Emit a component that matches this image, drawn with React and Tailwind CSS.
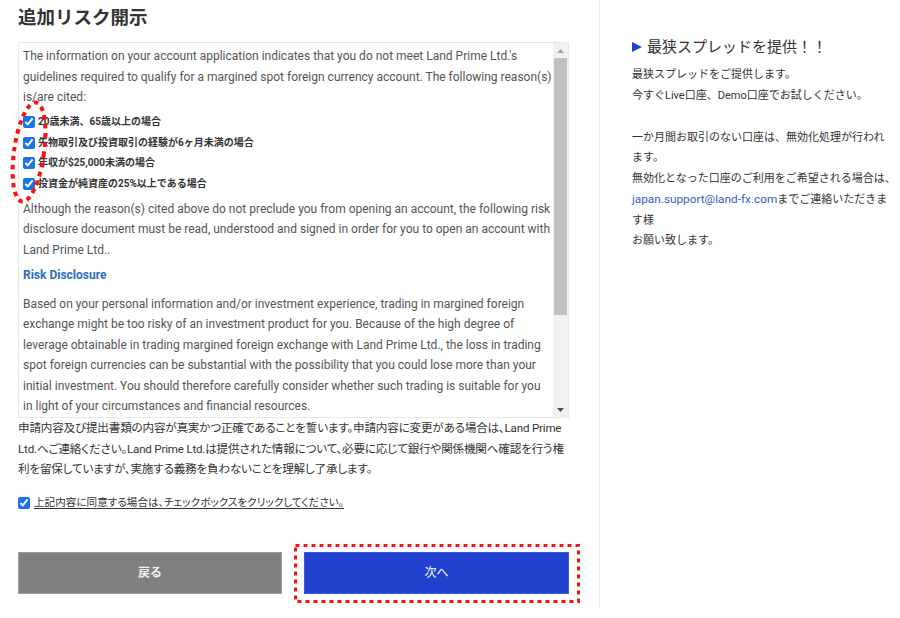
import React from "react";

const FONT = "font-['Roboto','Noto_Sans_CJK_JP',sans-serif]";

function Item({ children }) {
  return (
    <label className="flex items-center gap-[3px] h-[20.5px] text-[10px] font-bold text-[#333]">
      <input type="checkbox" defaultChecked className="w-[12px] h-[12px] m-0 accent-[#1a73e8]" />
      <span>{children}</span>
    </label>
  );
}

export default function App() {
  return (
    <div className={`w-[900px] h-[618px] bg-white flex ${FONT}`}>
      {/* left column */}
      <div className="relative w-[600px] h-[607px] shrink-0 border-r border-[#ececec] pl-[18px] pr-[30px] pt-[6px]">
        <h1 className="text-[18.5px] leading-[24px] font-bold text-[#333]">追加リスク開示</h1>

        <div className="mt-[12px] h-[376px] flex border border-[#e8e8e8]">
          <div className="flex-1 overflow-hidden pl-[4px] pr-[1px] pt-[3px] text-[12px] leading-[20.5px] text-[#555] whitespace-nowrap">
            <p>
              The information on your account application indicates that you do not meet Land Prime Ltd.'s<br />
              guidelines required to qualify for a margined spot foreign currency account. The following reason(s)<br />
              is/are cited:
            </p>
            <div className="mt-[4.5px] flex flex-col">
              <Item>20歳未満、65歳以上の場合</Item>
              <Item>先物取引及び投資取引の経験が6ヶ月未満の場合</Item>
              <Item>年収が$25,000未満の場合</Item>
              <Item>投資金が純資産の25%以上である場合</Item>
            </div>
            <p className="mt-[4.5px]">
              Although the reason(s) cited above do not preclude you from opening an account, the following risk<br />
              disclosure document must be read, understood and signed in order for you to open an account with<br />
              Land Prime Ltd..
            </p>
            <p className="mt-[5px] font-bold text-[#2d6cc0]">Risk Disclosure</p>
            <p className="mt-[8px]">
              Based on your personal information and/or investment experience, trading in margined foreign<br />
              exchange might be too risky of an investment product for you. Because of the high degree of<br />
              leverage obtainable in trading margined foreign exchange with Land Prime Ltd., the loss in trading<br />
              spot foreign currencies can be substantial with the possibility that you could lose more than your<br />
              initial investment. You should therefore carefully consider whether such trading is suitable for you<br />
              in light of your circumstances and financial resources.
            </p>
          </div>
          {/* scrollbar */}
          <div className="w-[15px] shrink-0 bg-[#f1f1f1] flex flex-col">
            <div className="h-[15px] flex items-center justify-center">
              <svg width="7" height="4" viewBox="0 0 7 4"><path d="M0 4 L3.5 0 L7 4 Z" fill="#a3a3a3" /></svg>
            </div>
            <div className="h-[257px] mx-[1px] bg-[#c1c1c1]" />
            <div className="flex-1" />
            <div className="h-[15px] flex items-center justify-center">
              <svg width="7" height="4" viewBox="0 0 7 4"><path d="M0 0 L7 0 L3.5 4 Z" fill="#505050" /></svg>
            </div>
          </div>
        </div>

        <p className="text-[11.6px] tracking-[-0.2px] leading-[20.5px] text-[#333] whitespace-nowrap [font-feature-settings:'palt']">
          申請内容及び提出書類の内容が真実かつ正確であることを誓います。申請内容に変更がある場合は、Land Prime<br />
          Ltd.へご連絡ください。Land Prime Ltd.は提供された情報について、必要に応じて銀行や関係機関へ確認を行う権<br />
          利を留保していますが、実施する義務を負わないことを理解し了承します。
        </p>

        <label className="mt-[13.5px] flex items-center gap-[4px] h-[20px] text-[10.6px] text-[#333] [font-feature-settings:'palt']">
          <input type="checkbox" defaultChecked className="w-[12px] h-[12px] m-0 accent-[#1a73e8]" />
          <span className="underline underline-offset-2">上記内容に同意する場合は、チェックボックスをクリックしてください。</span>
        </label>

        <div className="mt-[39px] flex gap-[22px]">
          <button className="w-[265px] h-[42px] bg-[#808080] text-[#f2f2f2] text-[12px] font-bold border border-[#9a9a9a]">戻る</button>
          <div className="relative">
            <button className="w-[265px] h-[42px] bg-[#2141cf] text-white text-[12px] border border-[#3b5be0]">次へ</button>
            <svg className="absolute left-[-10px] top-[-8px] pointer-events-none" width="286" height="59" viewBox="0 0 286 59">
              <rect x="1.5" y="1.5" width="283" height="56" fill="none" stroke="#ff1010" strokeWidth="3" strokeDasharray="4 4" />
            </svg>
          </div>
        </div>

        {/* red dashed ellipse annotation */}
        <svg className="absolute left-0 top-0 pointer-events-none" width="60" height="220" viewBox="0 0 60 220">
          <ellipse cx="29" cy="152" rx="15" ry="50" transform="rotate(8 29 152)" fill="none" stroke="#ff1010" strokeWidth="4" strokeDasharray="4.5 4.5" />
        </svg>
      </div>

      {/* right column */}
      <div className="flex-1 pl-[32px] pt-[35px] text-[#333]">
        <h2 className="flex items-center gap-[5px] text-[15px] leading-[24px]">
          <svg width="10" height="10" viewBox="0 0 10 10"><path d="M0 0 L10 5 L0 10 Z" fill="#2141cf" /></svg>
          <span>最狭スプレッドを提供！！</span>
        </h2>
        <p className="mt-[6px] text-[11px] leading-[20.5px]">
          最狭スプレッドをご提供します。<br />
          今すぐLive口座、Demo口座でお試しください。
        </p>
        <p className="mt-[21.5px] text-[11px] leading-[20.5px] whitespace-nowrap">
          一か月間お取引のない口座は、無効化処理が行われ<br />
          ます。<br />
          無効化となった口座のご利用をご希望される場合は、<br />
          <span className="text-[#3a5bc7] text-[11.8px]">japan.support@land-fx.com</span>までご連絡いただきま<br />
          す様<br />
          お願い致します。
        </p>
      </div>
    </div>
  );
}
